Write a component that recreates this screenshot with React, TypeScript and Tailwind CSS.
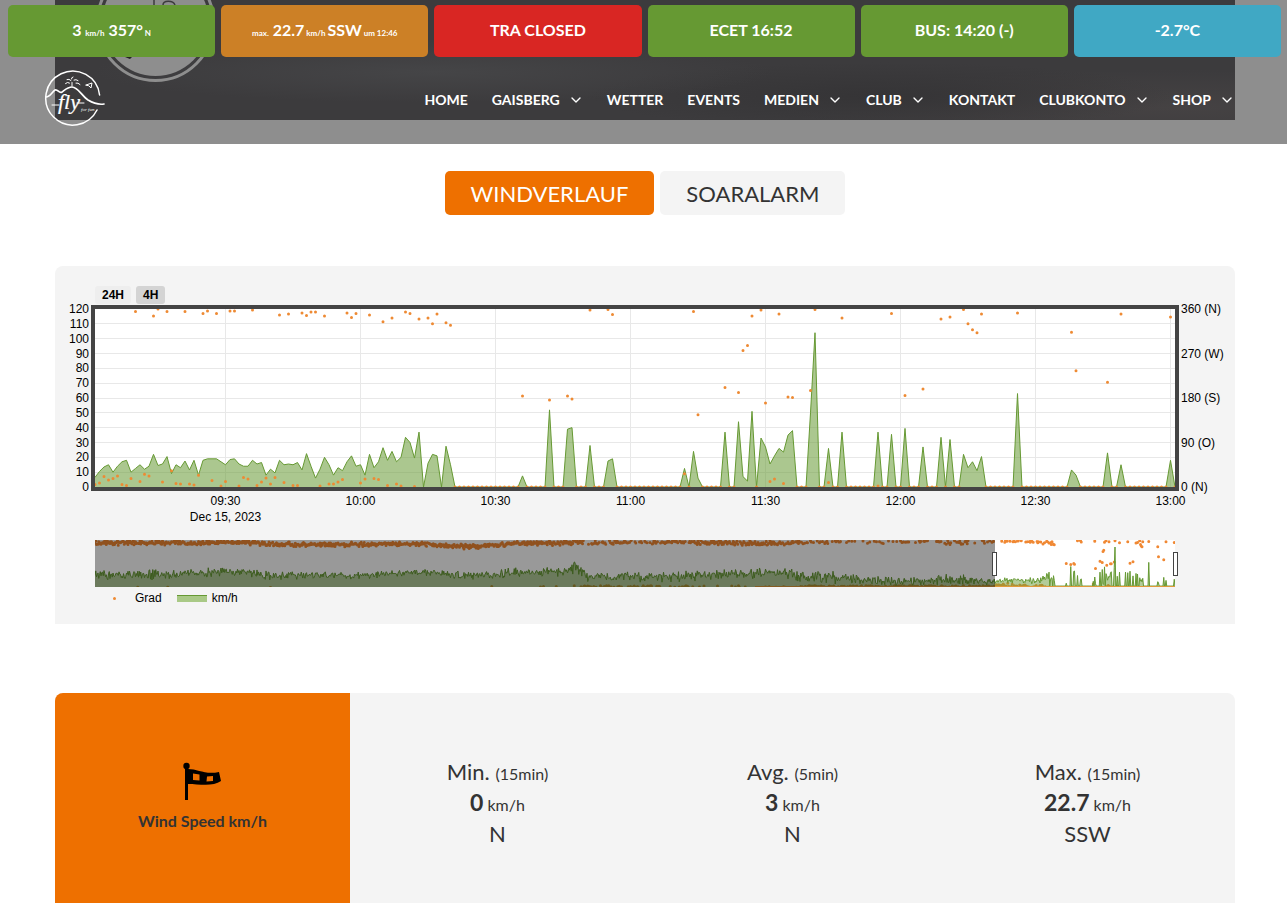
import React, { useState } from 'react';
import { FiChevronDown } from 'react-icons/fi';
import clsx from 'clsx';

// ---------- wind data, one value per minute starting at 09:01 ----------
const MORNING = [
  6.5, 10.5, 13.5, 15, 10, 14, 17, 18, 10, 12.5, 15, 12, 14, 22, 14.5, 15.5, 20.5, 9, 15, 13, 17.5, 11.5, 18, 8, 18, 19,
  19, 19, 17, 15, 18.5, 19, 15.5, 14, 14, 18, 15.5, 16.5, 8, 12, 9.5, 18, 15, 15.5, 15, 16.5, 11.5, 22.5, 14, 6, 12, 20,
  15, 8, 13, 11, 17, 21, 14, 15, 8, 22, 13, 17, 26.5, 18, 24, 17, 20, 33.5, 30, 19.5, 37, 0, 16, 22, 21, 0, 27.5, 15,
];

const GUSTS: Record<number, number> = {
  95: 7.5, 101: 52, 105: 39, 106: 40, 110: 28, 114: 17.5, 115: 19, 131: 12.5, 133: 24, 134: 6, 140: 37, 143: 44, 144: 7,
  145: 4, 146: 51, 148: 33, 149: 27, 150: 15.5, 151: 21, 152: 26, 153: 23.5, 154: 35, 155: 38, 159: 50, 160: 104,
  163: 26, 166: 37, 174: 37, 177: 35.5, 180: 39.5, 184: 27, 188: 33.5, 190: 32, 193: 22, 194: 13, 195: 17, 196: 11,
  197: 20.5, 205: 63, 217: 11.5, 218: 8, 225: 23, 228: 15, 239: 18,
};

const speeds = Array.from({ length: 241 }, (_, i) => MORNING[i] ?? GUSTS[i] ?? 0);

// [minute, degrees]
const directions: number[][] = [
  [0, 5], [1, 8], [2, 21], [3, 14], [4, 17], [5, 22], [6, 5], [7, 3], [8, 17], [9, 355], [10, 11], [11, 26], [12, 22],
  [13, 346], [14, 360], [15, 10], [16, 355], [17, 33], [18, 7], [19, 6], [20, 355], [21, 6], [22, 4], [23, 24],
  [24, 351], [25, 356], [26, 13], [27, 351], [28, 2], [29, 11], [30, 356], [31, 356], [32, 2], [33, 19], [34, 16],
  [35, 358], [36, 3], [37, 10], [38, 18], [39, 6], [40, 19], [41, 348], [42, 9], [43, 350], [44, 3], [45, 3],
  [46, 352], [47, 347], [48, 354], [49, 354], [50, 2], [51, 346], [52, 6], [53, 6], [54, 10], [55, 15], [56, 352],
  [57, 343], [58, 351], [59, 8], [60, 16], [61, 348], [62, 17], [63, 15], [64, 334], [65, 3], [66, 342], [67, 6],
  [68, 2], [69, 354], [70, 351], [71, 1], [72, 340], [74, 342], [75, 330], [76, 350], [78, 332], [79, 327], [95, 184],
  [101, 176], [105, 184], [106, 178], [110, 358], [114, 359], [115, 349], [131, 27], [133, 355], [134, 146],
  [140, 201], [143, 191], [144, 276], [145, 286], [146, 346], [148, 358], [149, 170], [150, 11], [151, 16], [152, 350],
  [153, 7], [154, 182], [155, 181], [159, 195], [160, 359], [163, 9], [166, 342], [174, 2], [177, 351], [180, 185],
  [184, 198], [188, 340], [190, 344], [193, 359], [194, 330], [195, 318], [196, 312], [197, 350], [205, 352],
  [217, 313], [218, 235], [225, 212], [228, 350], [239, 344],
];
speeds.forEach((v, i) => {
  if (v === 0 && i > 79) directions.push([i, 0]);
});

// ---------- earlier part of the day, for the range selector ----------
// [minute, mean speed, spread, mean direction, share of readings just east of north]
const DAY = [
  [0, 31, 15, 342, 0.02],
  [100, 30, 17, 344, 0.02],
  [130, 36, 13, 344, 0.01],
  [200, 37, 14, 346, 0.01],
  [230, 29, 14, 332, 0.02],
  [340, 28, 11, 330, 0],
  [430, 37, 11, 334, 0],
  [500, 28, 12, 312, 0],
  [560, 36, 15, 338, 0.05],
  [625, 37, 16, 342, 0.06],
  [645, 44, 28, 346, 0.08],
  [656, 25, 15, 348, 0.4],
  [780, 26, 17, 348, 0.25],
  [850, 33, 16, 342, 0.15],
  [925, 33, 17, 340, 0.2],
  [945, 24, 18, 352, 0.5],
  [1010, 21, 18, 354, 0.6],
  [1060, 13, 13, 356, 0.8],
  [1115, 13, 12, 354, 0.7],
  [1130, 19, 18, 346, 0.5],
  [1200, 12, 12, 350, 0.6],
];

let seed = 15122023;
const rand = () => {
  seed = (seed * 16807) % 2147483647;
  return seed / 2147483647;
};

const at = (minute: number, col: number) => {
  const i = Math.max(1, DAY.findIndex((row) => row[0] >= minute));
  const a = DAY[i - 1];
  const b = DAY[i];
  return a[col] + ((b[col] - a[col]) * (minute - a[0])) / (b[0] - a[0]);
};

const daySpeeds: number[] = [];
const dayDirections: number[][] = [];
for (let m = 0; m < 1200; m++) {
  daySpeeds.push(Math.max(1, at(m, 1) + (rand() + rand() - 1) * at(m, 2)));
  const deg = at(m, 3) + (rand() + rand() - 1) * 20;
  if (rand() < at(m, 4)) dayDirections.push([m, rand() * 14]);
  else if (deg <= 360) dayDirections.push([m, deg]);
}
daySpeeds.push(...speeds);
directions.forEach(([m, deg]) => dayDirections.push([m + 1200, deg]));

// ---------- drawing helpers ----------
const LEFT = 40;
const area = (values: number[], step: number, base: number, unit: number) =>
  values.map((v, i) => `${i ? 'L' : 'M'}${(LEFT + i * step).toFixed(2)} ${(base - v * unit).toFixed(2)}`).join('');

const dots = (points: number[][], step: number, base: number, height: number) =>
  points.map(([m, deg]) => `M${(LEFT + m * step).toFixed(2)} ${(base - (deg / 360) * height).toFixed(2)}h0`).join('');

const mainLine = area(speeds, 4.5, 183, 178 / 120);
const rangeLine = area(daySpeeds, 0.75, 282, 45 / 120);

const TIMES = ['09:30', '10:00', '10:30', '11:00', '11:30', '12:00', '12:30', '13:00'];
const COMPASS = ['0 (N)', '90 (O)', '180 (S)', '270 (W)', '360 (N)'];

const WindChart = () => (
  <svg
    viewBox="0 0 1180 286"
    className="block w-full overflow-visible font-['Liberation_Sans',sans-serif] text-[12px]"
    role="img"
    aria-label="Windverlauf"
  >
    <defs>
      <clipPath id="plot">
        <rect x="40" y="4" width="1080" height="181" />
      </clipPath>
      <clipPath id="range">
        <rect x="40" y="236" width="1080" height="47" />
      </clipPath>
    </defs>

    {/* Main plot */}
    <rect x="40" y="5" width="1080" height="178" fill="#fff" />
    <g stroke="#e8e8e8" shapeRendering="crispEdges">
      {Array.from({ length: 11 }, (_, i) => (
        <line key={i} x1="40" x2="1120" y1={183 - ((i + 1) * 178) / 12} y2={183 - ((i + 1) * 178) / 12} />
      ))}
      {TIMES.map((t, i) => (
        <line key={t} x1={170.5 + i * 135} x2={170.5 + i * 135} y1="5" y2="183" />
      ))}
    </g>
    <g clipPath="url(#plot)">
      <path d={`${mainLine}V183H40Z`} fill="#669933" fillOpacity="0.55" />
      <path d={mainLine} fill="none" stroke="#669933" />
      <path d={dots(directions, 4.5, 183, 178)} stroke="#ee8a33" strokeWidth="3" strokeLinecap="round" />
    </g>
    <rect x="38" y="3" width="1084" height="182" fill="none" stroke="#444" strokeWidth="4" />

    {/* Axis labels */}
    {Array.from({ length: 13 }, (_, i) => (
      <text key={i} x="34" y={187 - (i * 178) / 12} textAnchor="end">
        {i * 10}
      </text>
    ))}
    {COMPASS.map((label, i) => (
      <text key={label} x="1126" y={187 - (i * 178) / 4}>
        {label}
      </text>
    ))}
    {TIMES.map((t, i) => (
      <text key={t} x={170.5 + i * 135} y="201" textAnchor="middle">
        {t}
      </text>
    ))}
    <text x="170.5" y="217" textAnchor="middle">
      Dec 15, 2023
    </text>

    {/* Range selector */}
    <rect x="40" y="236" width="1080" height="47" fill="#fff" />
    <g clipPath="url(#range)">
      <path d={dots(dayDirections, 0.75, 283.5, 47)} stroke="#f08833" strokeWidth="3" strokeLinecap="round" />
      <path d={`${rangeLine}V283H40Z`} fill="#669933" fillOpacity="0.5" />
      <path d={rangeLine} fill="none" stroke="#669933" />
      <path d="M700 282.5H1120" stroke="#e09a3a" />
    </g>
    <rect x="40" y="236" width="900" height="47" fillOpacity="0.4" />
    <rect x="937.5" y="248.5" width="4" height="23" fill="#fff" stroke="#444" />
    <rect x="1118.5" y="248.5" width="4" height="23" fill="#fff" stroke="#444" />
  </svg>
);

const Logo = () => (
  <svg width="62" height="60" viewBox="0 0 62 60" fill="none" stroke="#fff" strokeLinecap="round" aria-label="fly for fun">
    <path d="M55.6 25 A27 27 0 1 0 53 40" strokeWidth="1.5" />
    <path d="M2 27 C6 27 8 22 11 20 C14 19 15 24 18 22 C22 19 24 17 28 17 C34 17 38 26 44 30 C49 33 54 35 60 34" strokeWidth="1.7" />
    <path d="M28 16V12.500 M21.500 13.500q2-2 4-.5 M23 9.500q2-1 4 1 M29 7q-2 .5-1.500 2 M30 10q2-1 4 .5 M32 13q2-.5 4 1.500" strokeWidth="1" />
    <path d="M42 15l6 -2 -1 5 -2 -2z" strokeWidth="1" />
    <path d="M8 35h7 M33 33h7" strokeWidth="1" />
    <text x="14" y="39" fill="#fff" stroke="#fff" strokeWidth="0.2" className="font-['Liberation_Serif',serif] text-[22px] italic">
      fly
    </text>
    <text x="37" y="41" fill="#fff" stroke="none" className="font-['Liberation_Serif',serif] text-[5px] italic">
      for fun
    </text>
  </svg>
);

const Windsock = () => (
  <svg width="42" height="40" viewBox="0 0 42 40" aria-hidden="true">
    <circle cx="4.500" cy="4" r="3.2" />
    <path d="M3 5h3v33H3z" />
    <path
      fillRule="evenodd"
      d="M6 7C16 7 23 13 37 10L39 19C31 25 17 22 6 22ZM11 11.500V18L17.500 18.500V12.500ZM25 14.500L24.500 19.500L31 19V14Z"
    />
  </svg>
);

const NAV = [
  { label: 'HOME' },
  { label: 'GAISBERG', menu: true },
  { label: 'WETTER' },
  { label: 'EVENTS' },
  { label: 'MEDIEN', menu: true },
  { label: 'CLUB', menu: true },
  { label: 'KONTAKT' },
  { label: 'CLUBKONTO', menu: true },
  { label: 'SHOP', menu: true },
];

const Tile = ({ color, children }: { color: string; children: React.ReactNode }) => (
  <a href="#" className={clsx('flex h-[52px] items-center justify-center rounded-[5px] pb-0.5 text-base font-bold text-white', color)}>
    <span>{children}</span>
  </a>
);

const Small = ({ children }: { children: React.ReactNode }) => <span className="text-[8px]">{children}</span>;

const Header = () => (
  <header className="grid h-36 bg-[#8e8e8e]">
    {/* Dimmed hero picture behind the bars */}
    <div className="col-start-1 row-start-1 mr-[52px] mb-6 ml-[55px] overflow-hidden bg-[#3c3b3d] bg-[radial-gradient(ellipse_at_32%_60%,#454547_0%,transparent_30%),radial-gradient(ellipse_at_70%_80%,#353436_0%,transparent_25%),radial-gradient(ellipse_at_95%_90%,#454243_0%,transparent_25%)]">
      <svg width="200" height="100" viewBox="0 0 200 100" fill="none" aria-hidden="true">
        <circle cx="100.500" cy="22.500" r="58" stroke="#8e8e8e" strokeWidth="3" />
        <circle cx="100.500" cy="22.500" r="53.500" fill="#8e8e8e" />
        <path d="M99 0v5M108 5c0-5 10-5 12 0" stroke="#3c3b3d" strokeWidth="1.500" />
        <path d="M70 57l5 2 2-2z" fill="#222" />
      </svg>
    </div>

    <div className="col-start-1 row-start-1 flex flex-col">
      <div className="grid grid-cols-6 gap-1.5 pt-[5px] pr-1.5 pl-2">
        <Tile color="bg-[#669933]">
          3 <Small>km/h</Small> 357°<Small> N</Small>
        </Tile>
        <Tile color="bg-[#cc8026]">
          <Small>max.</Small> 22.7<Small> km/h </Small>SSW<Small> um 12:46</Small>
        </Tile>
        <Tile color="bg-[#d92623]">TRA CLOSED</Tile>
        <Tile color="bg-[#669933]">ECET 16:52</Tile>
        <Tile color="bg-[#669933]">BUS: 14:20 (-)</Tile>
        <Tile color="bg-[#40a8c4]">-2.7°C</Tile>
      </div>

      <div className="flex grow items-center justify-between pr-[53px] pb-0.5 pl-11">
        <a href="#" aria-label="Startseite">
          <Logo />
        </a>
        <nav className="flex items-center gap-6 text-sm font-bold text-white">
          {NAV.map((item) => (
            <a key={item.label} href="#" className="flex items-center gap-2">
              {item.label}
              {item.menu && <FiChevronDown className="-mr-px h-4 w-4" />}
            </a>
          ))}
        </nav>
      </div>
    </div>
  </header>
);

const STATS = [
  { name: 'Min.', span: '(15min)', value: '0', dir: 'N' },
  { name: 'Avg.', span: '(5min)', value: '3', dir: 'N' },
  { name: 'Max.', span: '(15min)', value: '22.7', dir: 'SSW' },
];

const App = () => {
  const [tab, setTab] = useState('WINDVERLAUF');
  const [range, setRange] = useState('4H');

  return (
    <div className="bg-white font-[Lato,sans-serif] text-[#333]">
      <Header />

      <main className="pr-[52px] pl-[55px]">
        {/* Tabs */}
        <div className="mt-[27px] flex justify-center gap-1.5">
          {['WINDVERLAUF', 'SOARALARM'].map((name) => (
            <button
              key={name}
              onClick={() => setTab(name)}
              className={clsx(
                'h-11 cursor-pointer rounded-[5px] px-[26px] text-[22px]',
                tab === name ? 'bg-[#ee7000] text-white' : 'bg-[#f4f4f4] text-[#333]'
              )}
            >
              {name}
            </button>
          ))}
        </div>

        {/* Chart */}
        <section className="mt-[51px] rounded-t-lg bg-[#f4f4f4] pt-5 pb-[18px] text-black">
          <div className="flex gap-[5px] pl-10 font-['Liberation_Sans',sans-serif] text-[12px] font-bold">
            {['24H', '4H'].map((r) => (
              <button
                key={r}
                onClick={() => setRange(r)}
                className={clsx(
                  'h-[18px] cursor-pointer rounded-[3px] px-[7px] leading-[18px]',
                  range === r ? 'bg-[#d4d4d4]' : 'bg-[#eeeeee]'
                )}
              >
                {r}
              </button>
            ))}
          </div>
          <WindChart />
          <div className="flex h-4 items-center pl-[58px] font-['Liberation_Sans',sans-serif] text-[12px]">
            <span className="h-[3px] w-[3px] rounded-full bg-[#ee8a33]" />
            <span className="ml-[19px]">Grad</span>
            <span className="ml-[15px] h-[7px] w-[30px] border-t border-[#669933] bg-[#a9c986]" />
            <span className="ml-[5px]">km/h</span>
          </div>
        </section>

        {/* Wind speed */}
        <section className="mt-[69px] grid grid-cols-4 overflow-hidden rounded-t-lg bg-[#f4f4f4]">
          <div className="flex flex-col items-center justify-center bg-[#ee7000] pt-[69px] pb-[70px] font-bold">
            <Windsock />
            <p className="mt-[7px] text-base">Wind Speed km/h</p>
          </div>
          {STATS.map((s) => (
            <div key={s.name} className="pt-[63px] text-center text-[22px] leading-[31px]">
              <p>
                {s.name} <span className="text-base leading-none">{s.span}</span>
              </p>
              <p>
                <b className="text-[23px] leading-none">{s.value}</b>
                <span className="text-base leading-none"> km/h</span>
              </p>
              <p>{s.dir}</p>
            </div>
          ))}
        </section>
      </main>
    </div>
  );
};

export default App;
